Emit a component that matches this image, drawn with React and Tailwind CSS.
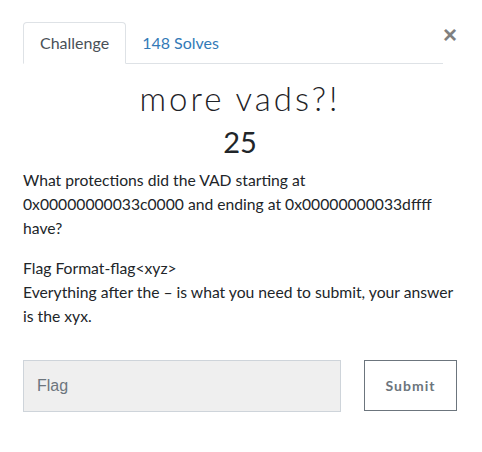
import React from 'react';

function App() {
  return (
    <div className="min-h-screen bg-white text-[#212529]">
      <div className="pl-[23px] pr-[25px] pt-[22px] font-['Lato','Noto_Sans',sans-serif]">
        {/* Tabs + close */}
        <div className="flex items-start">
          <div className="flex w-[420px] border-b border-[#dee2e6]">
            <div className="-mb-px h-[42px] px-4 flex items-center border border-[#dee2e6] border-b-white rounded-t-[4px] bg-white text-[16px] text-[#495057]">
              Challenge
            </div>
            <div className="h-[41px] px-4 flex items-center text-[16px] text-[#337ab7]">
              148 Solves
            </div>
          </div>
          <button className="ml-auto mt-[1px] text-[24px] leading-none font-bold text-[#808080] font-['Liberation_Sans',sans-serif]">
            ×
          </button>
        </div>

        {/* Title */}
        <h1 className="mt-[15px] text-center text-[33px] leading-[38px] font-light tracking-[3px] text-[#1e2226] font-['Lato',sans-serif]">
          more vads?!
        </h1>
        <div className="mt-[7px] text-center text-[29px] leading-[36px] text-[#212529]">25</div>

        {/* Description */}
        <div className="mt-[8px] text-[15.7px] leading-[24px] text-[#212529]">
          <p>
            What protections did the VAD starting at 0x00000000033c0000 and ending at 0x00000000033dffff have?
          </p>
          <p className="mt-4">
            Flag Format-flag&lt;xyz&gt;
            <br />
            Everything after the – is what you need to submit, your answer is the xyx.
          </p>
        </div>

        {/* Submit row */}
        <div className="mt-[32px] flex items-start">
          <input
            type="text"
            placeholder="Flag"
            className="w-[318px] h-[52px] px-[13px] bg-[#efefef] border border-[#ced4da] text-[16px] placeholder-[#6c757d] font-['Liberation_Sans',sans-serif] outline-none"
          />
          <button className="ml-[23px] w-[93px] h-[51px] border border-[#6c757d] text-[#6c757d] text-[14px] font-bold tracking-[1px]">
            Submit
          </button>
        </div>
      </div>
    </div>
  );
}

export default App;
